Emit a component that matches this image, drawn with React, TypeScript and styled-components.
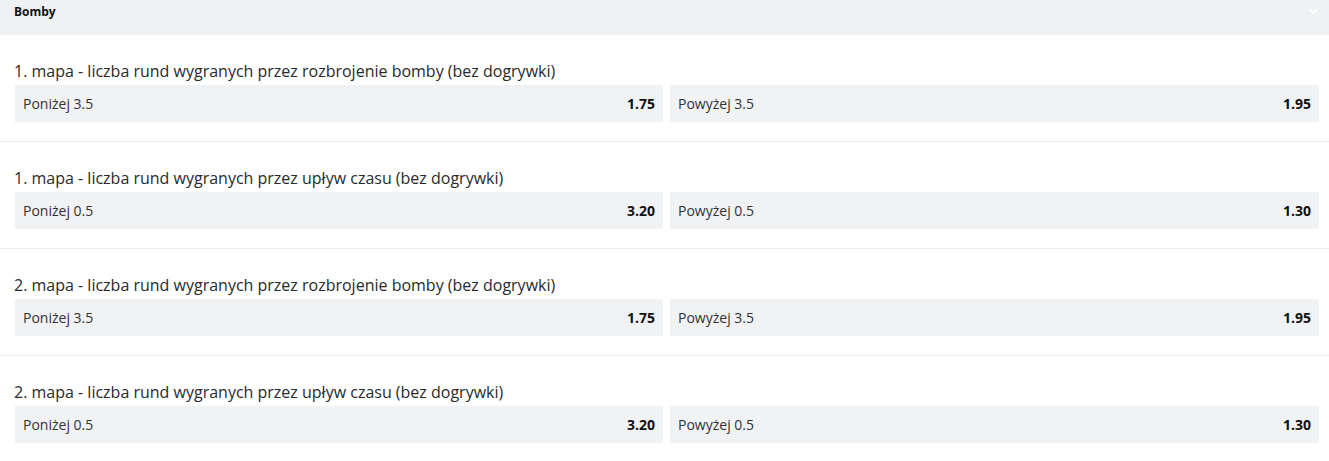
import React from "react";
import styled, { createGlobalStyle } from "styled-components";

const GlobalStyle = createGlobalStyle`
  body {
    margin: 0;
    background: #ffffff;
    font-family: "Open Sans", "Noto Sans", Arial, sans-serif;
  }
`;

const Panel = styled.section`
  width: 1329px;
  background: #ffffff;
`;

const Header = styled.div`
  height: 35px;
  background: #f0f1f3;
  display: flex;
  align-items: center;
  justify-content: space-between;
  padding: 0 11px 0 14px;
  box-sizing: border-box;
`;

const HeaderTitle = styled.span`
  font-size: 12px;
  font-weight: 700;
  color: #111;
  margin-top: -12px;
`;

const Chevron = styled.svg`
  width: 10px;
  height: 8px;
  margin-top: -13px;
`;

const Market = styled.div`
  padding: 25px 10px 19px 15px;
  border-bottom: 1px solid #ececec;
`;

const MarketTitle = styled.div`
  font-size: 16px;
  line-height: 22px;
  color: #2a2a2a;
  margin: 0 0 3px -1px;
`;

const Options = styled.div`
  display: grid;
  grid-template-columns: 648px 649px;
  gap: 7px;
`;

const Option = styled.div`
  height: 37px;
  background: #f1f2f4;
  display: flex;
  align-items: center;
  justify-content: space-between;
  padding: 0 8px;
  box-sizing: border-box;
  font-size: 14px;
`;

const Label = styled.span`
  color: #333;
`;

const Odds = styled.span`
  font-weight: 700;
  color: #111;
`;

const markets = [
  {
    title: "1. mapa - liczba rund wygranych przez rozbrojenie bomby (bez dogrywki)",
    line: "3.5",
    under: "1.75",
    over: "1.95",
  },
  {
    title: "1. mapa - liczba rund wygranych przez upływ czasu (bez dogrywki)",
    line: "0.5",
    under: "3.20",
    over: "1.30",
  },
  {
    title: "2. mapa - liczba rund wygranych przez rozbrojenie bomby (bez dogrywki)",
    line: "3.5",
    under: "1.75",
    over: "1.95",
  },
  {
    title: "2. mapa - liczba rund wygranych przez upływ czasu (bez dogrywki)",
    line: "0.5",
    under: "3.20",
    over: "1.30",
  },
];

export default function App() {
  return (
    <Panel>
      <GlobalStyle />
      <Header>
        <HeaderTitle>Bomby</HeaderTitle>
        <Chevron viewBox="0 0 10 8">
          <path d="M1 2l4 4 4-4" fill="none" stroke="#ffffff" strokeWidth="1.6" />
        </Chevron>
      </Header>
      {markets.map((m) => (
        <Market key={m.title}>
          <MarketTitle>{m.title}</MarketTitle>
          <Options>
            <Option>
              <Label>Poniżej {m.line}</Label>
              <Odds>{m.under}</Odds>
            </Option>
            <Option>
              <Label>Powyżej {m.line}</Label>
              <Odds>{m.over}</Odds>
            </Option>
          </Options>
        </Market>
      ))}
    </Panel>
  );
}
